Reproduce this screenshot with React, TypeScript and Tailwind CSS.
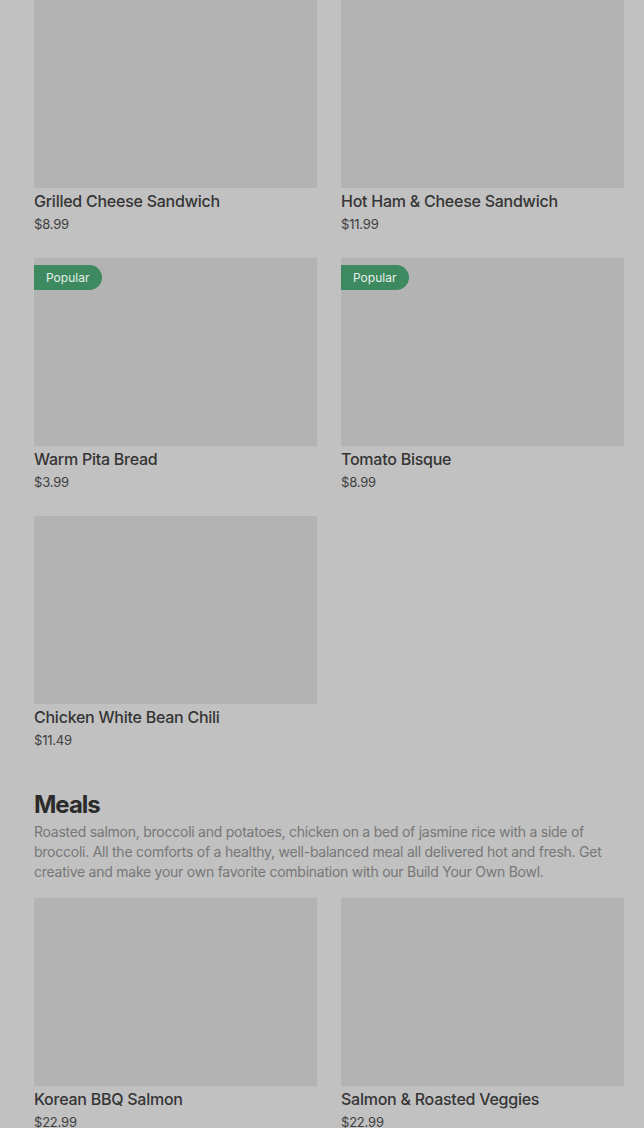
import React from "react";

type Item = { name: string; price: string; popular?: boolean };

const sides: Item[] = [
  { name: "Grilled Cheese Sandwich", price: "$8.99" },
  { name: "Hot Ham & Cheese Sandwich", price: "$11.99" },
  { name: "Warm Pita Bread", price: "$3.99", popular: true },
  { name: "Tomato Bisque", price: "$8.99", popular: true },
  { name: "Chicken White Bean Chili", price: "$11.49" },
];

const meals: Item[] = [
  { name: "Korean BBQ Salmon", price: "$22.99" },
  { name: "Salmon & Roasted Veggies", price: "$22.99" },
];

function ItemCard({ item }: { item: Item }) {
  return (
    <div className="flex flex-col">
      <div className="relative h-[188px] w-full bg-[#b3b3b3]">
        {item.popular && (
          <span className="absolute left-0 top-[7px] flex h-[25px] items-center rounded-r-full bg-[#3e8a60] pl-3 pr-[13px] text-[12px] text-[#e6efe9]">
            Popular
          </span>
        )}
      </div>
      <div className="mt-px text-[16px] font-medium leading-6 tracking-[-0.25px] text-[#353535]">{item.name}</div>
      <div className="mt-[1px] text-[13px] leading-5 tracking-[-0.2px] text-[#404040]">{item.price}</div>
    </div>
  );
}

export default function App() {
  return (
    <div
      className="min-h-[1128px] w-full overflow-hidden bg-[#c1c1c1] pl-[34px] pr-[20px]"
      style={{ fontFamily: "Inter, 'Noto Sans', sans-serif" }}
    >
      <div className="grid grid-cols-2 gap-x-6 gap-y-[24px]">
        {sides.map((it) => (
          <ItemCard key={it.name} item={it} />
        ))}
      </div>

      <section className="mt-[39px]">
        <h2 className="text-[24px] font-bold leading-8 tracking-[-1px] text-[#2b2b2b]">Meals</h2>
        <p className="mt-px text-[14px] leading-5 tracking-[-0.25px] text-[#777777]">
          Roasted salmon, broccoli and potatoes, chicken on a bed of jasmine rice with a side of broccoli. All the
          comforts of a healthy, well-balanced meal all delivered hot and fresh. Get creative and make your own
          favorite combination with our Build Your Own Bowl.
        </p>
        <div className="mt-4 grid grid-cols-2 gap-x-6 gap-y-[24px]">
          {meals.map((it) => (
            <ItemCard key={it.name} item={it} />
          ))}
        </div>
      </section>
    </div>
  );
}
